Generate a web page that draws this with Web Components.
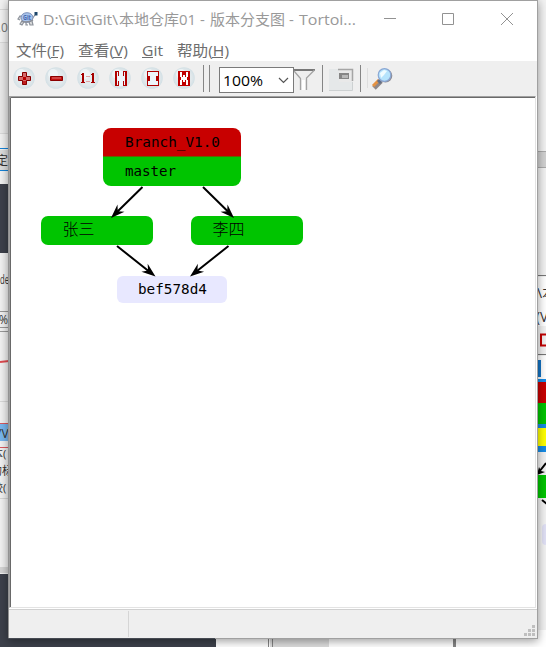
<!DOCTYPE html>
<html lang="zh-CN">
<head>
<meta charset="utf-8">
<title>版本分支图</title>
<style>
html,body{margin:0;height:100%;overflow:hidden}
body{font-family:"Open Sans","Noto Sans CJK SC",sans-serif;font-size:15px}
</style>
</head>
<body>
<desktop-stage>
  <app-window>
    <title-bar slot="title"></title-bar>
    <menu-bar slot="menu"></menu-bar>
    <tool-bar slot="tools"></tool-bar>
    <revision-graph slot="content"></revision-graph>
    <status-bar slot="status"></status-bar>
  </app-window>
</desktop-stage>
<script>
function define(name, html) {
  const t = document.createElement('template');
  t.innerHTML = html;
  customElements.define(name, class extends HTMLElement {
    constructor() {
      super();
      this.attachShadow({mode: 'open'}).append(t.content.cloneNode(true));
    }
    connectedCallback() {
      if (name === 'tool-icon') {
        const g = this.shadowRoot.querySelector('.' + this.getAttribute('kind'));
        g.style.display = 'inline';
      }
    }
  });
}

define('tool-icon', `<style>:host{display:block;width:32px;height:34px}svg{display:block}.k{display:none}</style>
<svg width="32" height="34" viewBox="0 0 32 34">
 <defs><radialGradient id="b"><stop offset="0" stop-color="#e8eff2"/><stop offset=".7" stop-color="#e1e8eb"/><stop offset="1" stop-color="#d3e0e5"/></radialGradient></defs>
 <circle cx="15" cy="17" r="10.800" fill="url(#b)"/><circle cx="12" cy="13" r="5" fill="#f7fbfd" opacity=".6"/>
 <g class="k plus"><path d="M13.500 11.500h4v4h4v4h-4v4h-4v-4h-4v-4h4z" fill="#c02020" stroke="#870000"/><path d="M14 12h3v4h4v3h-4v1h-3v-1h-4v-3h4z" fill="#d66b6b"/><path d="M14 16h3v3h-3z" fill="#b80000"/></g>
 <g class="k minus"><path d="M9.500 15.500h12v4h-12z" fill="#c41010" stroke="#8b0000"/><path d="M11 16.500h9v1h-9z" fill="#df7777"/></g>
 <g class="k one"><path d="M8 13h1v-1h2v9h1v1H8v-1h1v-7H8zM18 13h1v-1h2v9h1v1h-4v-1h1v-7h-1z" fill="#a50000"/><path d="M13 15h4v1h-4zM13 20h4v1h-4z" fill="#e0a3a3"/></g>
 <g class="k vfit"><path d="M10 10h12v15H10z" fill="#edf5fb"/><path d="M10 10h4v5h-1v-4h-1v13h1v-4h1v5h-4zM22 10h-4v5h1v-4h1v13h-1v-4h-1v5h4z" fill="#b00000"/></g>
 <g class="k hfit"><path d="M10 10h12v15H10z" fill="#edf5fb"/><path d="M10 10h12v6h-3v-1h2v-4H11v4h2v1h-3zM10 25h12v-6h-3v1h2v4H11v-4h2v-1h-3zM10 16h3v3h-3zM19 16h3v3h-3z" fill="#b00000"/></g>
 <g class="k fit"><path d="M9 10h12v15H9z" fill="#c00000"/><path d="M11 11h2v5h1v-5h2v5h1v-5h2v5h-1v3h1v5h-2v-5h-1v5h-2v-5h-1v5h-2v-5h1v-3h-1z" fill="#fff"/><path d="M13 11h4v3h-4zM13 21h4v3h-4z" fill="#c00000"/></g>
</svg>`);

define('title-bar', `<style>:host{display:block;height:39px;background:#fff}svg{display:block}text{font:15px "Open Sans","Noto Sans CJK SC",sans-serif;fill:#999}</style>
<svg width="528" height="39" viewBox="9 1 528 39">
 <path d="M20 20l-2-1 2-3 3 1M22 21l-2 3 2 1 2-3M29 22l1 3h3l-1-4M26 22v3h2M32 19l3-4" fill="#ddd" stroke="#8d939c" stroke-width="1.200"/>
 <ellipse cx="27" cy="17.500" rx="6" ry="4.800" fill="#a8c4ec" stroke="#7c8fb8"/>
 <path d="M21 21q6 2.500 12-1" fill="none" stroke="#8b8f98" stroke-width="1.500"/>
 <path d="M34.500 12h3v3.500h-3z" fill="#1d466b"/>
 <text x="23" y="20" textLength="8" lengthAdjust="spacingAndGlyphs" style="font-size:6.500px;font-weight:bold;fill:#4768b1">Git</text>
 <text x="43" y="25" textLength="75" lengthAdjust="spacingAndGlyphs">D:\\Git\\Git\\</text>
 <text x="119" y="25" textLength="60" lengthAdjust="spacingAndGlyphs">本地仓库</text>
 <text x="179" y="25" textLength="17" lengthAdjust="spacingAndGlyphs">01</text>
 <text x="200" y="25">-</text>
 <text x="210" y="25" textLength="75" lengthAdjust="spacingAndGlyphs">版本分支图</text>
 <text x="289" y="25">-</text>
 <text x="299" y="25" textLength="57" lengthAdjust="spacingAndGlyphs">Tortoi...</text>
 <path d="M384 18.500h12M442.500 13.500h11v11h-11zM501 13l12 12M513 13l-12 12" fill="none" stroke="#929292"/>
</svg>`);

define('menu-bar', `<style>:host{display:block;height:21px;background:#fff}svg{display:block}text{font:15px "Open Sans","Noto Sans CJK SC",sans-serif;fill:#6d6d6d}</style>
<svg width="528" height="21" viewBox="9 40 528 21">
 <text x="16" y="56" textLength="48" lengthAdjust="spacingAndGlyphs">文件(F)</text>
 <text x="78" y="56" textLength="50" lengthAdjust="spacingAndGlyphs">查看(V)</text>
 <text x="142" y="56" textLength="21" lengthAdjust="spacingAndGlyphs">Git</text>
 <text x="177" y="56" textLength="52" lengthAdjust="spacingAndGlyphs">帮助(H)</text>
 <path d="M51 57.500h7M113 57.500h9M142 57.500h11M212 57.500h11" stroke="#6d6d6d"/>
</svg>`);

define('zoom-select', `<style>:host{display:flex;box-sizing:border-box;width:75px;height:26px;border:1px solid #7a7a7a;background:#fff;align-items:center;justify-content:space-between;padding:0 4px 0 3px}svg{display:block}</style>
<svg width="42" height="24"><text x="0" y="18" textLength="40" lengthAdjust="spacingAndGlyphs" style="font:15px 'Open Sans',sans-serif" fill="#000">100%</text></svg>
<svg width="11" height="8"><path d="M1 2l4.500 4.500L10 2" fill="none" stroke="#555" stroke-width="1.200"/></svg>`);

define('tool-bar', `<style>:host{display:flex;height:35px;background:#efefef;overflow:hidden}zoom-select{margin:6px 0 0 9px}.sep{display:block;flex:none}tool-icon,zoom-select{flex:none}</style>
<tool-icon kind="plus"></tool-icon><tool-icon kind="minus"></tool-icon><tool-icon kind="one"></tool-icon><tool-icon kind="vfit"></tool-icon><tool-icon kind="hfit"></tool-icon><tool-icon kind="fit"></tool-icon>
<svg class="sep" width="9" height="35" viewBox="201 61 9 35"><path d="M203.500 65v27M209.500 65v27" stroke="#858585"/></svg>
<zoom-select></zoom-select>
<svg class="sep" width="102" height="35" viewBox="294 61 102 35">
 <path d="M294 70h19l-6.500 8v11.500H301V79z" fill="#eee"/>
 <path d="M293 69h22v2h-22z" fill="#777"/><path d="M294 71l6.500 7.500V90M306.500 90V78l8-8" fill="none" stroke="#a3a3a3" stroke-width="1.300"/><path d="M302 80h3v10h-3z" fill="#fff"/>
 <path d="M322.500 65v27M360.500 65v27" stroke="#858585"/><path d="M367.500 68v20" stroke="#dedede"/>
 <path d="M329 69h23v22h-23z" fill="#e5e8e9"/><path d="M329 90.500h23.500V69" stroke="#cdd1d2" fill="none"/><path d="M339 69h14v13h-14z" fill="#e9e9e9"/><path d="M338 69.500h14.500V81" fill="none" stroke="#a5a5a5" stroke-width="1.500"/><path d="M339 73h10v6h-10z" fill="#858585"/><path d="M342 75h6v3h-6z" fill="#b8b8b8"/>
 <path d="M374 88l7-7" stroke="#8f8889" stroke-width="5"/><path d="M373 86l6-6" stroke="#e59242" stroke-width="3"/><path d="M378 80l3 3" stroke="#61708b" stroke-width="3"/>
 <circle cx="385.500" cy="75.800" r="6.800" fill="#8b8b96"/><circle cx="384.500" cy="75" r="6.300" fill="#b6e4fc" stroke="#8aa7d4" stroke-width="1.200"/><path d="M380 73l4-3 3 1-3 4-3 3z" fill="#f0fcff"/>
</svg>`);

define('revision-graph', `<style>:host{display:block;box-sizing:border-box;width:527px;height:512px;background:#fff;border:1px solid;border-color:#a0a0a0 #e3e3e3 #e3e3e3 #a0a0a0}svg{display:block}text{fill:#000;font:13.500px "DejaVu Sans Mono",monospace}.cjk{font:300 16px "Noto Sans CJK SC",sans-serif}</style>
<svg width="525" height="510" viewBox="10 97 525 510">
 <path d="M10.500 607V97.500H535" fill="none" stroke="#696969"/>
 <path d="M103 157v-21a8 8 0 0 1 8-8h122a8 8 0 0 1 8 8v21z" fill="#c80000"/>
 <path d="M103 157v21a8 8 0 0 0 8 8h122a8 8 0 0 0 8-8v-21z" fill="#00c400"/>
 <path d="M103 156.500h138" stroke="#646200"/>
 <rect x="41" y="216" width="112" height="29" rx="7" fill="#00c400"/>
 <rect x="191" y="216" width="112" height="29" rx="7" fill="#00c400"/>
 <rect x="117" y="276" width="110" height="27" rx="6" fill="#e8e8ff"/>
 <text x="125" y="147" textLength="95" lengthAdjust="spacingAndGlyphs">Branch_V1.0</text>
 <text x="125" y="176" textLength="51" lengthAdjust="spacingAndGlyphs">master</text>
 <text x="138" y="294" textLength="69" lengthAdjust="spacingAndGlyphs">bef578d4</text>
 <text class="cjk" x="62.500" y="235">张三</text><text class="cjk" x="212.500" y="235">李四</text>
 <path stroke="#000" stroke-width="2" fill="none" d="M142.500 187l-27 26.500M203 187l27 26.500M117 246l34 27M228.500 246l-34 27"/>
 <path d="M0 0l-14-5 4.500 5L-14 5z" transform="translate(111 218) rotate(135.500)"/>
 <path d="M0 0l-14-5 4.500 5L-14 5z" transform="translate(234 218) rotate(44.500)"/>
 <path d="M0 0l-14-5 4.500 5L-14 5z" transform="translate(155.500 276.500) rotate(38.500)"/>
 <path d="M0 0l-14-5 4.500 5L-14 5z" transform="translate(190 276.500) rotate(141.500)"/>
</svg>`);

define('status-bar', `<style>:host{display:block;box-sizing:border-box;height:29px;border-top:1px solid #d0d0d0;background:#efefef}svg{display:block}</style>
<svg width="528" height="28" viewBox="9 610 528 28"><path d="M128.500 611v26" stroke="#d5d5d5"/><path d="M524 633h3v3h-3zM528 633h3v3h-3zM532 633h3v3h-3zM528 629h3v3h-3zM532 629h3v3h-3zM532 625h3v3h-3z" fill="#bfbfbf"/></svg>`);

define('app-window', `<style>:host{display:flex;flex-direction:column;box-sizing:border-box;width:530px;height:639px;border:1px solid #a0a0a0;border-left-color:#929292;background:#fff;box-shadow:0 2px 9px rgba(0,0,0,.4)}.gap{flex:1}.edge{height:1px;background:linear-gradient(90deg,#464a52 0 207px,#a0a0a0 207px);margin:0 -1px -1px}</style>
<slot name="title"></slot><slot name="menu"></slot><slot name="tools"></slot><slot name="content"></slot><div class="gap"></div><slot name="status"></slot><div class="edge"></div>`);

define('desktop-stage', `<style>:host{display:grid;width:546px;height:647px;overflow:hidden}.bg,.win{grid-area:1/1}.bg{display:block}.win{padding-left:8px}.bg text{font:12px "Open Sans","Noto Sans CJK SC",sans-serif;fill:#333}</style>
<svg class="bg" width="546" height="647" viewBox="0 0 546 647">
 <path fill="#f2f2f2" d="M0 0h546v647H0z"/>
 <path fill="#d9d9d9" d="M0 9h9v1H0zM0 42h9v1H0zM0 133h9v1H0zM0 401h9v1H0z"/>
 <text x="-9" y="32" style="font-size:12px;fill:#777">1.0</text>
 <path fill="#eaeaea" d="M0 43h9v90H0z"/><path fill="#dedede" d="M0 150h9v20H0z"/><path fill="#1683d8" d="M0 148h9v1H0zM0 170h9v1H0z"/><text x="-4" y="165">定</text>
 <path fill="#3d414b" d="M0 184h9v69H0z"/><text x="0" y="284" textLength="9" lengthAdjust="spacingAndGlyphs">de</text><path fill="#999" d="M0 311h9v1H0zM0 327h9v1H0zM0 331h9v1H0z"/><text x="-1" y="324" textLength="9" lengthAdjust="spacingAndGlyphs">%</text>
 <path d="M0 362l9-1" stroke="#e04b50" stroke-width="2"/><path fill="#78b7ef" d="M0 424h9v17H0z"/><path fill="#d95960" d="M0 423h9v1H0zM0 447h9v1H0z"/><text x="-3" y="438">/V</text>
 <text x="-8" y="458" style="font-size:11px">本(</text><text x="-9" y="475" style="font-size:11px">的标</text><text x="-8" y="492" style="font-size:11px">较(</text>
 <path fill="#d5d5d5" d="M0 498h9v1H0zM0 567h9v6H0z"/>
 <path fill="#3d414b" d="M0 574h216v73H0z"/>
 <path fill="#fff" d="M216 630h330v17H216z"/><path fill="#ddd" d="M270 630h59v17h-59z"/><path fill="#858585" d="M268 630h1v17h-1zM272 630h1v17h-1zM453 630h3v17h-3z"/>
 <path fill="#d1d1d1" d="M537 151h9v17h-9z"/><path fill="#aaa" d="M537 151h9v1h-9zM537 167h9v1h-9z"/>
 <path fill="#777" d="M537 275h9v1h-9zM537 354h9v1h-9z"/><path fill="#fff" d="M537 277h9v49h-9z"/>
 <text x="537" y="298" style="font-size:14px">\\本</text><text x="536" y="322" style="font-size:14px" textLength="12" lengthAdjust="spacingAndGlyphs">(V</text><path d="M546 334.500h-5v11h5" fill="none" stroke="#c30000" stroke-width="2"/>
 <path fill="#fff" d="M537 356h9v24h-9z"/><path fill="#1374c5" d="M538 360h3v17h-3z"/><path fill="#168be5" d="M537 379h9v3h-9zM537 424h9v4h-9zM537 446h9v6h-9z"/><path fill="#c80000" d="M537 382h9v21h-9z"/><path fill="#00c400" d="M537 403h9v21h-9zM537 475h9v23h-9z"/><path fill="#ff0" d="M537 428h9v18h-9z"/>
 <path d="M546 463l-7 9M542 500l5 4" fill="none" stroke="#000" stroke-width="2"/><path d="M537 475l2-8 2 4 4 1z"/><rect x="542" y="524" width="12" height="21" rx="4" fill="#e0e0f5"/>
</svg>
<div class="win"><slot></slot></div>`);
</script>
</body>
</html>
